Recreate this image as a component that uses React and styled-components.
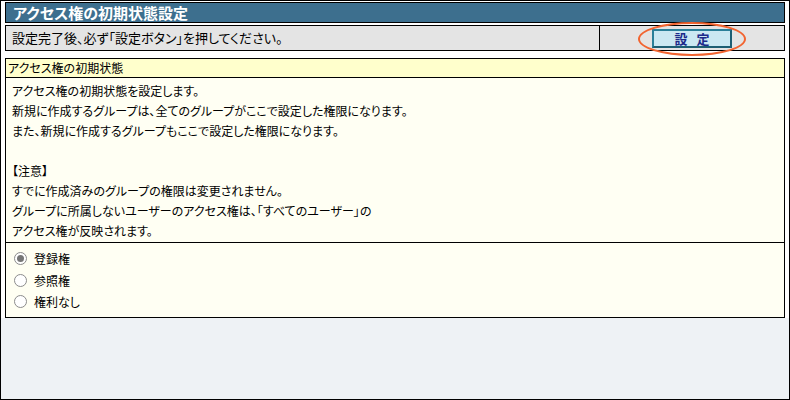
import React from "react";
import styled, { createGlobalStyle } from "styled-components";

const GlobalStyle = createGlobalStyle`
  body {
    margin: 0;
    background: #eef2f5;
    font-family: "Noto Sans CJK JP", "Noto Sans", sans-serif;
    font-feature-settings: "palt";
  }
`;

const Frame = styled.div`
  width: 790px;
  height: 400px;
  box-sizing: border-box;
  border: 1px solid #000;
  background: #eef2f5;
`;

const Sheet = styled.div`
  background: #fff;
  padding: 1px 4px 0 4px;
  display: flex;
  flex-direction: column;
`;

const TitleBar = styled.div`
  height: 21px;
  box-sizing: border-box;
  border: 1px solid #000;
  background: #3d6f8e;
  color: #fff;
  font-size: 15px;
  font-weight: bold;
  line-height: 19px;
  padding-left: 7px;
`;

const ActionRow = styled.div`
  margin-top: 2px;
  height: 26px;
  box-sizing: border-box;
  border: 1px solid #000;
  background: #e4e4e4;
  display: grid;
  grid-template-columns: 593px 1fr;
`;

const Notice = styled.div`
  font-size: 13px;
  line-height: 24px;
  padding-left: 6px;
  color: #000;
`;

const ButtonCell = styled.div`
  border-left: 1px solid #000;
  display: flex;
  align-items: center;
  justify-content: center;
  position: relative;
`;

const SetButton = styled.button`
  width: 80px;
  height: 19px;
  box-sizing: border-box;
  border: 2px solid #2a7f99;
  border-right-color: #1d5e73;
  border-bottom-color: #1d5e73;
  background: #cbe8f2;
  color: #1c2a8a;
  font-family: inherit;
  font-size: 13px;
  font-weight: bold;
  letter-spacing: 9px;
  padding: 0 0 0 9px;
  line-height: 15px;
`;

const Highlight = styled.span`
  position: absolute;
  left: 38px;
  top: -4px;
  width: 108px;
  height: 34px;
  box-sizing: border-box;
  border: 2px solid #f26430;
  border-radius: 50%;
  pointer-events: none;
`;

const Panel = styled.div`
  margin-top: 7px;
  border: 1px solid #000;
  background: #fffff3;
`;

const PanelHead = styled.div`
  height: 19px;
  box-sizing: border-box;
  border-bottom: 1px solid #000;
  background: #ffffcc;
  font-size: 12px;
  line-height: 18px;
  padding-left: 2px;
`;

const PanelText = styled.div`
  padding: 3px 0 1px 6px;
  font-size: 12px;
  line-height: 20px;
  border-bottom: 1px solid #000;
`;

const Line = styled.div`
  height: 20px;
  white-space: nowrap;
`;

const Choices = styled.div`
  padding: 5px 0 4px 8px;
  display: flex;
  flex-direction: column;
`;

const Choice = styled.label`
  height: 21.5px;
  display: flex;
  align-items: center;
  gap: 7px;
  font-size: 12px;
`;

const Radio = styled.input.attrs({ type: "radio", name: "initial" })`
  appearance: none;
  margin: 0;
  width: 13px;
  height: 13px;
  border-radius: 50%;
  border: 1px solid #8c8c8c;
  background: #fff;
  box-sizing: border-box;
  display: grid;
  place-items: center;
  &:checked::after {
    content: "";
    width: 7px;
    height: 7px;
    border-radius: 50%;
    background: #767676;
  }
`;

const lines = [
  "アクセス権の初期状態を設定します。",
  "新規に作成するグループは、全てのグループがここで設定した権限になります。",
  "また、新規に作成するグループもここで設定した権限になります。",
  "",
  "【注意】",
  "すでに作成済みのグループの権限は変更されません。",
  "グループに所属しないユーザーのアクセス権は、「すべてのユーザー」の",
  "アクセス権が反映されます。",
];

const options = ["登録権", "参照権", "権利なし"];

export default function App() {
  return (
    <>
      <GlobalStyle />
      <Frame>
        <Sheet>
          <TitleBar>アクセス権の初期状態設定</TitleBar>
          <ActionRow>
            <Notice>設定完了後、必ず「設定ボタン」を押してください。</Notice>
            <ButtonCell>
              <SetButton>設定</SetButton>
              <Highlight />
            </ButtonCell>
          </ActionRow>
          <Panel>
            <PanelHead>アクセス権の初期状態</PanelHead>
            <PanelText>
              {lines.map((t, i) => (
                <Line key={i}>{t}</Line>
              ))}
            </PanelText>
            <Choices>
              {options.map((o, i) => (
                <Choice key={o}>
                  <Radio defaultChecked={i === 0} />
                  {o}
                </Choice>
              ))}
            </Choices>
          </Panel>
        </Sheet>
      </Frame>
    </>
  );
}
